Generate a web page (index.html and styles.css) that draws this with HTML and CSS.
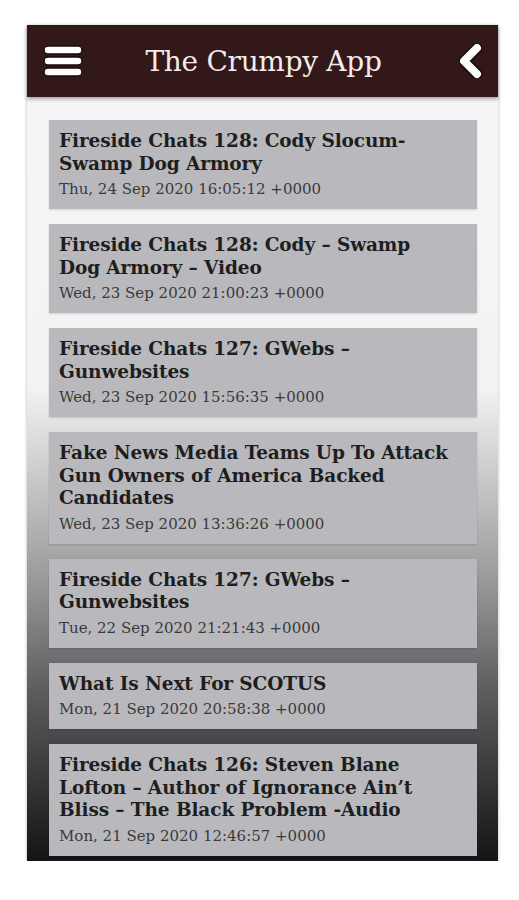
FILE: index.html
```html
<!DOCTYPE html>
<html lang="en">
<head>
    <meta charset="UTF-8">
    <meta name="viewport" content="width=device-width, initial-scale=1.0">
    <title>The Crumpy App</title>
    <link rel="stylesheet" href="styles.css">
</head>
<body>
    <div class="phone">
        <div class="app-bar">
            <svg class="menu-icon" width="40" height="32" viewBox="0 0 40 32">
                <rect x="1" y="1" width="38" height="8" rx="4" fill="#fff" stroke="#1a0a0a" stroke-width="1.5"/>
                <rect x="1" y="12" width="38" height="8" rx="4" fill="#fff" stroke="#1a0a0a" stroke-width="1.5"/>
                <rect x="1" y="23" width="38" height="8" rx="4" fill="#fff" stroke="#1a0a0a" stroke-width="1.5"/>
            </svg>
            <h1>The Crumpy App</h1>
            <svg class="back-icon" width="28" height="34" viewBox="0 0 28 34">
                <path d="M21 4 L8 17 L21 30" fill="none" stroke="#1a0a0a" stroke-width="11" stroke-linecap="round" stroke-linejoin="round"/>
                <path d="M21 4 L8 17 L21 30" fill="none" stroke="#fff" stroke-width="8" stroke-linecap="round" stroke-linejoin="round"/>
            </svg>
        </div>
        <div class="feed">
            <div class="post">
                <div class="post-title">Fireside Chats 128: Cody Slocum-Swamp Dog Armory</div>
                <div class="post-date">Thu, 24 Sep 2020 16:05:12 +0000</div>
            </div>
            <div class="post">
                <div class="post-title">Fireside Chats 128: Cody – Swamp Dog Armory – Video</div>
                <div class="post-date">Wed, 23 Sep 2020 21:00:23 +0000</div>
            </div>
            <div class="post">
                <div class="post-title">Fireside Chats 127: GWebs – Gunwebsites</div>
                <div class="post-date">Wed, 23 Sep 2020 15:56:35 +0000</div>
            </div>
            <div class="post">
                <div class="post-title">Fake News Media Teams Up To Attack Gun Owners of America Backed Candidates</div>
                <div class="post-date">Wed, 23 Sep 2020 13:36:26 +0000</div>
            </div>
            <div class="post">
                <div class="post-title">Fireside Chats 127: GWebs – Gunwebsites</div>
                <div class="post-date">Tue, 22 Sep 2020 21:21:43 +0000</div>
            </div>
            <div class="post">
                <div class="post-title">What Is Next For SCOTUS</div>
                <div class="post-date">Mon, 21 Sep 2020 20:58:38 +0000</div>
            </div>
            <div class="post">
                <div class="post-title">Fireside Chats 126: Steven Blane Lofton – Author of Ignorance Ain’t Bliss – The Black Problem -Audio</div>
                <div class="post-date">Mon, 21 Sep 2020 12:46:57 +0000</div>
            </div>
        </div>
    </div>
</body>
</html>
```

FILE: styles.css
```css
body {
    margin: 0;
    background-color: #fff;
    font-family: "DejaVu Serif", "Liberation Serif", serif;
}
.phone {
    width: 471px;
    margin: 25px 0 0 27px;
    box-shadow: 0 1px 3px rgba(0,0,0,0.3);
}
.app-bar {
    height: 72px;
    background-color: #321819;
    display: grid;
    grid-template-columns: 40px 1fr 40px;
    align-items: center;
    padding: 0 14px 0 16px;
    box-shadow: 0 2px 4px rgba(0,0,0,0.35);
    position: relative;
}
.app-bar h1 {
    margin: 0;
    text-align: center;
    font-weight: normal;
    font-size: 28px;
    color: #f3ecea;
    letter-spacing: -0.3px;
}
.back-icon {
    justify-self: end;
}
.feed {
    display: flex;
    flex-direction: column;
    gap: 15px;
    padding: 23px 21px 5px 22px;
    background: linear-gradient(to bottom, #f6f6f8 0%, #f3f3f3 38%, #9e9ea0 62%, #5c5c5e 78%, #141416 100%);
}
.post {
    background-color: #b9b9bd;
    padding: 10px 24px 8px 10px;
    color: #1e1e1e;
    box-shadow: 0 1px 2px rgba(0,0,0,0.15);
}
.post-title {
    font-weight: bold;
    font-size: 18.5px;
    line-height: 22.5px;
    letter-spacing: -0.1px;
}
.post-date {
    margin-top: 2px;
    font-size: 15px;
    line-height: 24px;
    color: #3a3a3a;
}
```
